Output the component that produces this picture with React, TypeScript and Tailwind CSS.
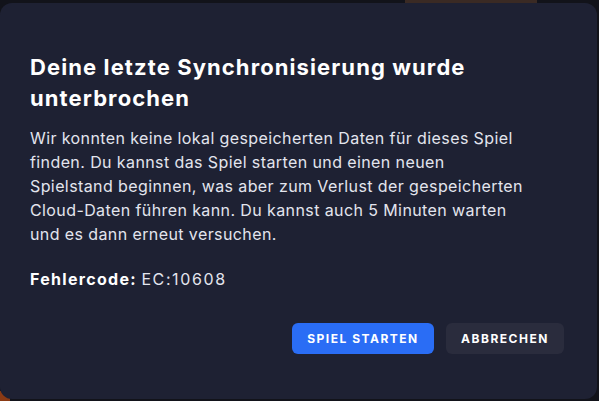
export default function App() {
  return (
    <div className="relative w-[599px] h-[401px] overflow-hidden bg-[#12131a] font-['Inter',sans-serif]">
      {/* backdrop bits peeking out behind the dialog */}
      <div className="absolute left-[405px] top-0 w-[132px] h-[6px] bg-[#3a2a24]" />
      <div className="absolute -left-[4px] bottom-0 w-[14px] h-[10px] bg-[#8a3a14]" />

      <div className="relative ml-0 mt-[3px] w-[597px] h-[396px] rounded-[12px] bg-[#1e2133] px-[30px] pt-[49px] flex flex-col">
        <h1 className="text-[22px] leading-[31px] font-bold text-white tracking-[1.1px]">
          Deine letzte Synchronisierung wurde
          <br />
          unterbrochen
        </h1>
        <p className="mt-[12px] text-[16px] leading-[24px] tracking-[0.4px] text-[#e3e5ee] whitespace-nowrap">
          Wir konnten keine lokal gespeicherten Daten für dieses Spiel
          <br />
          finden. Du kannst das Spiel starten und einen neuen
          <br />
          Spielstand beginnen, was aber zum Verlust der gespeicherten
          <br />
          Cloud-Daten führen kann. Du kannst auch 5 Minuten warten
          <br />
          und es dann erneut versuchen.
        </p>
        <p className="mt-[21px] text-[16px] leading-[24px] text-[#e3e5ee]">
          <span className="font-bold text-white tracking-[1.3px]">Fehlercode:</span>{" "}
          <span className="tracking-[1.6px]">EC:10608</span>
        </p>
        <div className="mt-[32px] flex justify-end gap-[12px] pr-[3px]">
          <button className="h-[31px] w-[142px] rounded-[6px] bg-[#2a6df5] text-[12px] font-bold tracking-[1.5px] text-white">
            SPIEL STARTEN
          </button>
          <button className="h-[31px] w-[118px] rounded-[6px] bg-[#2a2c3d] text-[12px] font-bold tracking-[1.5px] text-white">
            ABBRECHEN
          </button>
        </div>
      </div>
    </div>
  );
}
